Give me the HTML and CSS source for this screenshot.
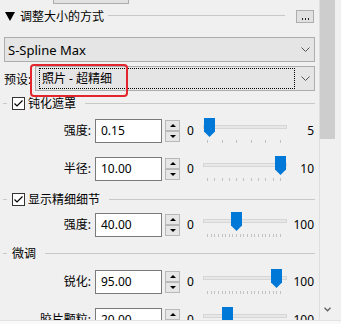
FILE: index.html
```html
<!DOCTYPE html>
<html>
<head>
<meta charset="utf-8">
<link rel="stylesheet" href="styles.css">
</head>
<body>
<div class="screen">
  <div class="main">
    <div class="panel">
      <div class="topbtn"></div>
      <div class="shead">
        <svg class="tri" width="10" height="9" viewBox="0 0 10 9"><polygon points="0,0 10,0 5,9" fill="#000"/></svg>
        <span class="stitle">调整大小的方式</span>
        <span class="sline"></span>
        <span class="dots"><svg width="16" height="11" viewBox="0 0 16 11"><rect x="5" y="7" width="1" height="2" fill="#222"/><rect x="8" y="7" width="1" height="2" fill="#222"/><rect x="11" y="7" width="1" height="2" fill="#222"/></svg></span>
      </div>
      <div class="combo big">
        <span class="ctext">S-Spline Max</span>
        <svg class="chev" width="9" height="5" viewBox="0 0 9 5"><polyline points="0.5,0.5 4.5,4.5 8.5,0.5" fill="none" stroke="#555" stroke-width="1"/></svg>
      </div>
      <div class="preset">
        <span class="plabel">预设:</span>
        <div class="combo pcombo">
          <span class="focus">照片 - 超精细</span>
          <svg class="chev" width="9" height="5" viewBox="0 0 9 5"><polyline points="0.5,0.5 4.5,4.5 8.5,0.5" fill="none" stroke="#555" stroke-width="1"/></svg>
        </div>
      </div>

      <div class="ghead g1">
        <span class="gtick"></span>
        <svg class="cb" width="13" height="13" viewBox="0 0 13 13"><rect x="0.5" y="0.5" width="12" height="12" fill="#fff" stroke="#333"/><polyline points="2.5,6.5 5,9 10.5,3.5" fill="none" stroke="#000" stroke-width="1.2"/></svg>
        <span class="gtext">钝化遮罩</span>
        <span class="gline"></span>
      </div>
      <div class="row r1">
        <span class="lbl">强度:</span>
        <span class="inp">0.15</span>
        <span class="spin"><span class="sb up"></span><span class="sb down"></span></span>
        <span class="zero">0</span>
        <span class="slider">
          <span class="track"></span>
          <span class="ticks"><i></i><i></i><i></i><i></i><i></i><i></i></span>
          <svg class="thumb" style="left:1px" width="11" height="19" viewBox="0 0 11 19"><path d="M0 0H11V13.5L5.5 19L0 13.5Z" fill="#0078d7"/></svg>
        </span>
        <span class="max">5</span>
      </div>
      <div class="row r2">
        <span class="lbl">半径:</span>
        <span class="inp">10.00</span>
        <span class="spin"><span class="sb up"></span><span class="sb down"></span></span>
        <span class="zero">0</span>
        <span class="slider">
          <span class="track"></span>
          <span class="ticks"><i></i><i></i><i></i><i></i><i></i><i></i><i></i><i></i><i></i><i></i><i></i></span>
          <svg class="thumb" style="left:72px" width="11" height="19" viewBox="0 0 11 19"><path d="M0 0H11V13.5L5.5 19L0 13.5Z" fill="#0078d7"/></svg>
        </span>
        <span class="max">10</span>
      </div>

      <div class="ghead g2">
        <span class="gtick"></span>
        <svg class="cb" width="13" height="13" viewBox="0 0 13 13"><rect x="0.5" y="0.5" width="12" height="12" fill="#fff" stroke="#333"/><polyline points="2.5,6.5 5,9 10.5,3.5" fill="none" stroke="#000" stroke-width="1.2"/></svg>
        <span class="gtext">显示精细细节</span>
        <span class="gline"></span>
      </div>
      <div class="row r3">
        <span class="lbl">强度:</span>
        <span class="inp">40.00</span>
        <span class="spin"><span class="sb up"></span><span class="sb down"></span></span>
        <span class="zero">0</span>
        <span class="slider">
          <span class="track"></span>
          <span class="ticks"><i></i><i></i><i></i><i></i><i></i><i></i><i></i><i></i><i></i><i></i><i></i><i></i><i></i><i></i><i></i><i></i><i></i><i></i><i></i><i></i><i></i></span>
          <svg class="thumb" style="left:28px" width="11" height="19" viewBox="0 0 11 19"><path d="M0 0H11V13.5L5.5 19L0 13.5Z" fill="#0078d7"/></svg>
        </span>
        <span class="max">100</span>
      </div>

      <div class="ghead g3">
        <span class="gtick"></span>
        <span class="gtext plain">微调</span>
        <span class="gline"></span>
      </div>
      <div class="row r4">
        <span class="lbl">锐化:</span>
        <span class="inp">95.00</span>
        <span class="spin"><span class="sb up"></span><span class="sb down"></span></span>
        <span class="zero">0</span>
        <span class="slider">
          <span class="track"></span>
          <span class="ticks"><i></i><i></i><i></i><i></i><i></i><i></i><i></i><i></i><i></i><i></i><i></i><i></i><i></i><i></i><i></i><i></i><i></i><i></i><i></i><i></i><i></i></span>
          <svg class="thumb" style="left:68px" width="11" height="19" viewBox="0 0 11 19"><path d="M0 0H11V13.5L5.5 19L0 13.5Z" fill="#0078d7"/></svg>
        </span>
        <span class="max">100</span>
      </div>
      <div class="row r5">
        <span class="lbl">胶片颗粒:</span>
        <span class="inp">20.00</span>
        <span class="spin"><span class="sb up"></span><span class="sb down"></span></span>
        <span class="zero">0</span>
        <span class="slider">
          <span class="track"></span>
          <span class="ticks"><i></i><i></i><i></i><i></i><i></i><i></i><i></i><i></i><i></i><i></i><i></i><i></i><i></i><i></i><i></i><i></i><i></i><i></i><i></i><i></i><i></i></span>
          <svg class="thumb" style="left:19px" width="11" height="19" viewBox="0 0 11 19"><path d="M0 0H11V13.5L5.5 19L0 13.5Z" fill="#0078d7"/></svg>
        </span>
        <span class="max">100</span>
      </div>
    </div>
    <div class="vscroll">
      <div class="vthumb"></div>
      <div class="vfill"></div>
      <div class="varrow"><svg width="7" height="5" viewBox="0 0 7 5"><polyline points="0.5,0.8 3.5,3.8 6.5,0.8" fill="none" stroke="#606060" stroke-width="1.3"/></svg></div>
    </div>
  </div>
  <div class="footer"></div>
  <div class="annot"></div>
</div>
</body>
</html>
```
FILE: styles.css
```css
html, body {
  margin: 0;
  padding: 0;
}
body {
  background: #f0f0f0;
  font-family: "Noto Sans", "Noto Sans CJK SC", sans-serif;
  font-size: 12px;
  color: #000;
}
.screen {
  position: relative;
  width: 341px;
  height: 324px;
  overflow: hidden;
}
.main {
  display: flex;
  height: 320px;
  overflow: hidden;
}
.panel {
  width: 318px;
  flex: none;
}
.topbtn {
  margin-left: 53px;
  width: 76px;
  height: 4px;
  box-sizing: border-box;
  border: 1px solid #adadad;
  border-top: none;
  background: #e1e1e1;
}
.shead {
  display: flex;
  align-items: center;
  height: 24px;
  margin-right: 4px;
}
.tri {
  margin-left: 5px;
  margin-top: 1px;
  flex: none;
}
.stitle {
  margin-left: 5px;
  white-space: nowrap;
}
.sline {
  flex: 1;
  height: 1px;
  background: #c8c8c8;
  margin: 0 11px 1px 4px;
}
.dots {
  width: 18px;
  height: 13px;
  box-sizing: border-box;
  border: 1px solid #adadad;
  background: #e1e1e1;
  display: flex;
  margin-top: 1px;
}
.combo {
  display: flex;
  align-items: center;
  height: 25px;
  box-sizing: border-box;
  border: 1px solid #adadad;
  background: #e5e5e5;
}
.big {
  margin: 9px 3px 0 4px;
}
.ctext {
  flex: 1;
  padding-left: 3px;
  font-size: 13px;
  white-space: nowrap;
}
.chev {
  flex: none;
  margin: 0 4px 0 6px;
}
.preset {
  display: flex;
  align-items: center;
  height: 25px;
  margin: 4px 3px 0 4px;
}
.plabel {
  width: 31px;
  flex: none;
  white-space: nowrap;
}
.pcombo {
  flex: 1;
}
.focus {
  flex: 1;
  height: 21px;
  box-sizing: border-box;
  margin-left: 3px;
  border: 1px dotted #000;
  padding-left: 2px;
  line-height: 19px;
  white-space: nowrap;
}
.ghead {
  display: flex;
  align-items: center;
  height: 13px;
  margin-right: 3px;
}
.g1 { margin-top: 6px; }
.g2 { margin-top: 12px; }
.g3 { margin-top: 10px; }
.gtick {
  width: 4px;
  height: 1px;
  background: #c8c8c8;
  margin-left: 3px;
  flex: none;
}
.cb {
  margin-left: 5px;
  flex: none;
}
.gtext {
  margin-left: 3px;
  white-space: nowrap;
  line-height: 13px;
}
.gtext.plain {
  margin-left: 5px;
}
.gline {
  flex: 1;
  height: 1px;
  background: #c8c8c8;
  margin-left: 9px;
}
.row {
  display: flex;
  height: 24px;
  margin-right: 3px;
}
.r1 { margin-top: 9px; }
.r2 { margin-top: 14px; }
.r3 { margin-top: 7px; }
.r4 { margin-top: 10px; }
.r5 { margin-top: 14px; }
.lbl {
  width: 95px;
  flex: none;
  box-sizing: border-box;
  padding-right: 4px;
  text-align: right;
  line-height: 24px;
  white-space: nowrap;
}
.inp {
  width: 67px;
  height: 24px;
  flex: none;
  box-sizing: border-box;
  border: 1px solid #7a7a7a;
  background: #fff;
  padding-left: 5px;
  line-height: 22px;
}
.spin {
  margin-left: 3px;
  width: 15px;
  flex: none;
  display: flex;
  flex-direction: column;
  padding-top: 1px;
}
.sb {
  height: 11px;
  box-sizing: border-box;
  border: 1px solid #b9b9b9;
  background: #e6e6e6;
  display: flex;
  align-items: center;
  justify-content: center;
}
.sb::after {
  content: "";
  width: 0;
  height: 0;
  border-left: 3px solid transparent;
  border-right: 3px solid transparent;
}
.up::after {
  border-bottom: 3px solid #000;
}
.down::after {
  border-top: 3px solid #000;
}
.zero {
  margin-left: 7px;
  width: 8px;
  flex: none;
  line-height: 24px;
}
.slider {
  position: relative;
  margin-left: 8px;
  width: 84px;
  flex: none;
  display: flex;
  flex-direction: column;
}
.track {
  margin-top: 6px;
  height: 4px;
  box-sizing: border-box;
  border: 1px solid #d6d6d6;
  background: #e7e7e7;
}
.ticks {
  display: flex;
  justify-content: space-between;
  margin: 11px 6px 0 4px;
  height: 3px;
}
.ticks i {
  width: 1px;
  height: 3px;
  background: #c2c2c2;
}
.thumb {
  position: absolute;
  top: -1px;
}
.max {
  flex: 1;
  text-align: right;
  padding-right: 1px;
  line-height: 24px;
}
.vscroll {
  width: 17px;
  flex: none;
  margin-left: 1px;
  border-left: 1px solid #dedede;
  display: flex;
  flex-direction: column;
}
.vthumb {
  width: 15px;
  height: 139px;
  background: #cdcdcd;
}
.vfill {
  flex: 1;
}
.varrow {
  width: 15px;
  height: 17px;
  margin-bottom: 2px;
  display: flex;
  align-items: center;
  justify-content: center;
}
.footer {
  height: 4px;
  box-sizing: border-box;
  border-top: 1px solid #e2e2e2;
  background: #f9f9f9;
}
.annot {
  position: absolute;
  left: 30px;
  top: 64px;
  width: 98px;
  height: 33px;
  box-sizing: border-box;
  border: 2px solid #e3262d;
  border-radius: 4px;
}
```
